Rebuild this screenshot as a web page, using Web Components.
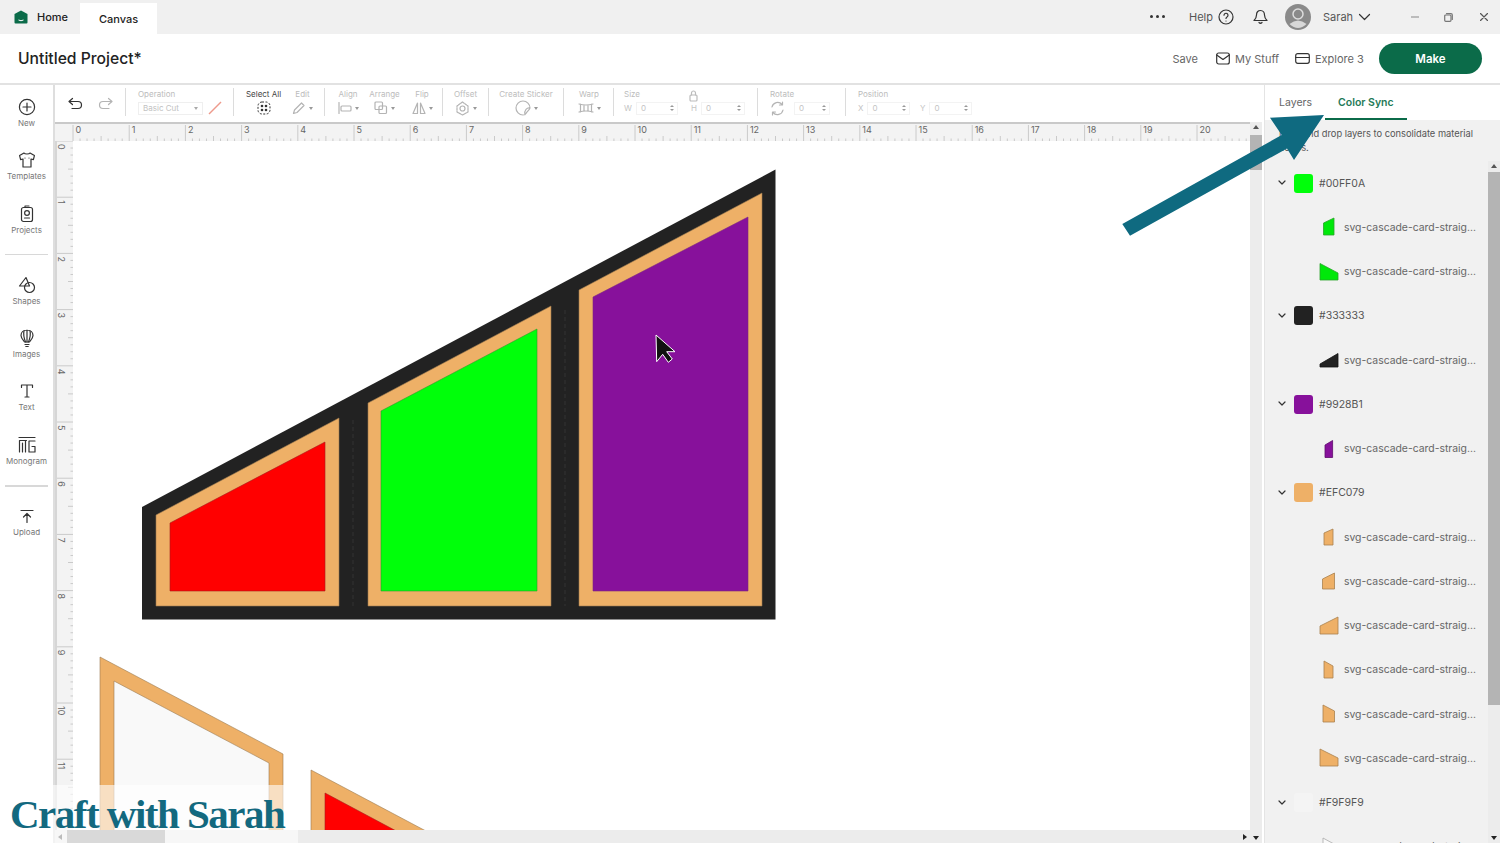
<!DOCTYPE html>
<html lang="en">
<head>
<meta charset="utf-8">
<title>Untitled Project</title>
<style>
  html, body { margin: 0; height: 100%; overflow: hidden; background: #fff; }
  body { font-family: Inter, "Liberation Sans", sans-serif; color: #333; }
  .ico { display: block; fill: none; stroke: currentColor; stroke-width: 1.2; stroke-linecap: round; stroke-linejoin: round; }
</style>
</head>
<body>

<cs-app>
  <cs-topbar slot="topbar"></cs-topbar>
  <cs-projectbar slot="projectbar" name="Untitled Project*"></cs-projectbar>

  <cs-rail slot="rail">
    <cs-rail-item label="New"><svg class="ico" width="20" height="20" viewBox="0 0 20 20"><circle cx="10" cy="10" r="7.6"/><path d="M10 6v8M6 10h8"/></svg></cs-rail-item>
    <cs-rail-item label="Templates"><svg class="ico" width="20" height="20" viewBox="0 0 20 20"><path d="M7 3 2.6 5.6l1 4L6 9v8h8V9l2.400.6 1-4L13 3c-.8 1.300-5.200 1.300-6 0z"/><path d="M8 8h.01M12 8h.01"/></svg></cs-rail-item>
    <cs-rail-item label="Projects"><svg class="ico" width="20" height="20" viewBox="0 0 20 20"><rect x="4.500" y="3.500" width="11" height="14" rx="2"/><path d="M8 3.500V2h4"/><circle cx="10" cy="9" r="2.400"/><path d="M7.500 14h5"/></svg></cs-rail-item>
    <cs-rail-sep></cs-rail-sep>
    <cs-rail-item label="Shapes"><svg class="ico" width="20" height="20" viewBox="0 0 20 20"><path d="M9 2.500 2.500 11h10z"/><circle cx="12.500" cy="12.500" r="5"/></svg></cs-rail-item>
    <cs-rail-item label="Images"><svg class="ico" width="20" height="20" viewBox="0 0 20 20"><path d="M10 2c-3.800 0-6 2.600-6 5.500 0 2.500 2 4.500 3.500 6.500h5C14 12 16 10 16 7.500 16 4.600 13.800 2 10 2z"/><path d="M10 2v12M7 3c-.8 3 0 7 1.500 11M13 3c.8 3 0 7-1.500 11M8 16.500h4M8.800 18.500h2.400"/></svg></cs-rail-item>
    <cs-rail-item label="Text"><svg class="ico" width="20" height="20" viewBox="0 0 20 20"><path d="M4.500 6.500V4h11v2.500M10 4v12M8 16h4"/></svg></cs-rail-item>
    <cs-rail-item label="Monogram"><svg class="ico" width="20" height="20" viewBox="0 0 20 20"><path d="M2 2.500h16M2.500 5.500h7M2.500 5.500V17M5.500 8v9M8.500 5.500V17M18 6h-6v11h6v-5.500h-3"/></svg></cs-rail-item>
    <cs-rail-sep></cs-rail-sep>
    <cs-rail-item label="Upload"><svg class="ico" width="20" height="20" viewBox="0 0 20 20"><path d="M4 4.500h12M10 16.500V8M6.500 11 10 7.500l3.500 3.500"/></svg></cs-rail-item>
  </cs-rail>

  <cs-toolbar slot="toolbar">
    <cs-tool style="width:45px" class="plain">
      <div style="display:flex;gap:15px;color:#333;margin-top:-8px">
        <svg class="ico" width="15" height="14" viewBox="0 0 15 14"><path d="M4.500 1.500 1 4.500l3.500 3M1 4.500h9a3.500 3.500 0 0 1 0 7H4"/></svg>
        <svg class="ico" width="15" height="14" viewBox="0 0 15 14" style="color:#b4b4b4"><path d="M10.500 1.500 14 4.500l-3.500 3M14 4.500H5a3.500 3.500 0 0 0 0 7h6"/></svg>
      </div>
    </cs-tool>
    <cs-tool-sep></cs-tool-sep>
    <cs-tool label="Operation" start style="width:83px">
      <div style="display:flex;align-items:center;gap:5px">
        <cs-select text="Basic Cut"></cs-select>
        <svg width="14" height="14" viewBox="0 0 14 14"><path d="M1 13 13 1" stroke="#ee9a8c" stroke-width="1.500"/></svg>
      </div>
    </cs-tool>
    <cs-tool-sep></cs-tool-sep>
    <cs-tool label="Select All" active style="width:35px">
      <svg width="16" height="16" viewBox="0 0 16 16" fill="none" stroke="#333"><rect x="2" y="2" width="12" height="12" rx="4" stroke-dasharray="2 1.500"/><g fill="#333" stroke="none"><circle cx="6" cy="6" r="1.300"/><circle cx="10" cy="6" r="1.300"/><circle cx="6" cy="10" r="1.300"/><circle cx="10" cy="10" r="1.300"/></g></svg>
    </cs-tool>
    <cs-tool label="Edit" caret style="width:19px;margin-left:12px">
      <svg class="ico" width="14" height="14" viewBox="0 0 14 14"><path d="M1.500 12.500 2.500 9 9.500 2l2.500 2.500-7 7z"/></svg>
    </cs-tool>
    <cs-tool-sep></cs-tool-sep>
    <cs-tool label="Align" caret style="width:20px;margin-left:1px">
      <svg class="ico" width="14" height="14" viewBox="0 0 14 14"><path d="M1 1.500v11"/><rect x="3" y="5" width="10" height="5" rx="1"/></svg>
    </cs-tool>
    <cs-tool label="Arrange" caret style="width:31px;margin-left:11px">
      <svg class="ico" width="14" height="14" viewBox="0 0 14 14"><rect x="1" y="1" width="7.500" height="7.500" rx="1"/><rect x="5" y="5" width="7.500" height="7.500" rx="1"/></svg>
    </cs-tool>
    <cs-tool label="Flip" caret style="width:16px;margin-left:14px">
      <svg class="ico" width="14" height="14" viewBox="0 0 14 14"><path d="M5.500 2 1 12.500h4.500zM8.500 2 13 12.500H8.500z"/></svg>
    </cs-tool>
    <cs-tool-sep></cs-tool-sep>
    <cs-tool label="Offset" caret style="width:21px">
      <svg class="ico" width="15" height="15" viewBox="0 0 15 15"><circle cx="7.500" cy="7.500" r="2.500"/><path d="M7.500 1 13 5v6l-5.500 3L2 11V5z" stroke-dasharray="2 1"/></svg>
    </cs-tool>
    <cs-tool-sep></cs-tool-sep>
    <cs-tool label="Create Sticker" caret style="width:50px">
      <svg class="ico" width="16" height="16" viewBox="0 0 16 16"><path d="M8 15A7 7 0 1 1 15 8c0 1-3.500 4.500-4 5.500S9 15 8 15zM15 8c-3-.6-6 2-5 6.600"/></svg>
    </cs-tool>
    <cs-tool-sep></cs-tool-sep>
    <cs-tool label="Warp" caret style="width:24px;margin-left:1px">
      <svg class="ico" width="16" height="12" viewBox="0 0 16 12"><path d="M1 2q7 2 14 0M1 10q7-2 14 0M2.500 2v8M6 3v6M10 3v6M13.500 2v8"/></svg>
    </cs-tool>
    <cs-tool-sep></cs-tool-sep>
    <cs-tool label="Size" start style="width:121px;margin-left:-2px">
      <svg slot="aside" class="ico" width="9" height="12" viewBox="0 0 9 12" style="margin:0 0 0 49px"><rect x="1" y="5" width="7" height="6" rx="1"/><path d="M2.500 5V3a2 2 0 0 1 4 0v2"/></svg>
      <div style="display:flex;gap:13px">
        <cs-num prefix="W" style="width:54px"></cs-num>
        <cs-num prefix="H" style="width:54px"></cs-num>
      </div>
    </cs-tool>
    <cs-tool-sep></cs-tool-sep>
    <cs-tool label="Rotate" start style="width:63px">
      <div style="display:flex;gap:5px;align-items:center">
        <svg class="ico" width="15" height="15" viewBox="0 0 15 15"><path d="M2 6a5.700 5.700 0 0 1 10-2.500M13 9A5.700 5.700 0 0 1 3 11.500M12.500 1v3h-3M2.500 14v-3h3"/></svg>
        <cs-num style="width:40px"></cs-num>
      </div>
    </cs-tool>
    <cs-tool-sep></cs-tool-sep>
    <cs-tool label="Position" start style="width:116px">
      <div style="display:flex;gap:10px">
        <cs-num prefix="X" style="width:52px"></cs-num>
        <cs-num prefix="Y" style="width:52px"></cs-num>
      </div>
    </cs-tool>
  </cs-toolbar>

  <cs-workspace slot="workspace">
    <cs-ruler slot="top" dir="h" length="1195" count="21"></cs-ruler>
    <cs-ruler slot="left" dir="v" length="689" count="12"></cs-ruler>
    <cs-canvas slot="canvas"></cs-canvas>
    <cs-scrollbar slot="vscroll" dir="v" before="3" size="35"></cs-scrollbar>
    <cs-scrollbar slot="hscroll" dir="h" before="2" size="98"></cs-scrollbar>
  </cs-workspace>

  <cs-panel slot="panel">
    <cs-color-group color="#00ff0a" name="#00FF0A">
      <cs-layer color="#00e80a" edge="#2aa52a" points="4.500,6 15,1 15,18 4.500,18"></cs-layer>
      <cs-layer color="#00e80a" edge="#2aa52a" points="1,1.500 19,11 19,18 1,18"></cs-layer>
    </cs-color-group>
    <cs-color-group color="#222222" name="#333333">
      <cs-layer color="#222" edge="#111" points="1,14 19,3.500 19,17 1,17"></cs-layer>
    </cs-color-group>
    <cs-color-group color="#87119b" name="#9928B1">
      <cs-layer color="#87119b" edge="#5e0d6c" points="6,6 13.600,1.500 13.600,18.500 6,18.500"></cs-layer>
    </cs-color-group>
    <cs-color-group color="#eeb067" name="#EFC079">
      <cs-layer color="#eeb067" edge="#a9814f" points="5,6 14,2 14,18 5,18"></cs-layer>
      <cs-layer color="#eeb067" edge="#a9814f" points="3.500,8 15.500,2 15.500,18 3.500,18"></cs-layer>
      <cs-layer color="#eeb067" edge="#a9814f" points="1,10 19,1 19,18 1,18"></cs-layer>
      <cs-layer color="#eeb067" edge="#a9814f" points="5,1 14,6 14,18 5,18"></cs-layer>
      <cs-layer color="#eeb067" edge="#a9814f" points="4,1 15.500,7 15.500,18 4,18"></cs-layer>
      <cs-layer color="#eeb067" edge="#a9814f" points="1,1 19,10 19,18 1,18"></cs-layer>
    </cs-color-group>
    <cs-color-group color="#f4f4f4" name="#F9F9F9">
      <cs-layer color="#f9f9f9" edge="#aaa" points="4,1 15,7 15,18 4,18"></cs-layer>
    </cs-color-group>
  </cs-panel>
</cs-app>

<cs-watermark text="Craft with Sarah"></cs-watermark>
<cs-arrow></cs-arrow>

<script>
class BaseElement extends HTMLElement {
  constructor() {
    super();
    this.attachShadow({ mode: 'open' });
  }
  connectedCallback() {
    this.shadowRoot.innerHTML = `<style>${this.getStyles()}</style>${this.getTemplate()}`;
  }
  getStyles() { return ':host { display: block; }'; }
  getTemplate() { return '<slot></slot>'; }
}

const ICO = 'fill="none" stroke="currentColor" stroke-width="1.200" stroke-linecap="round" stroke-linejoin="round" style="display:block"';

class CsApp extends BaseElement {
  getStyles() {
    return `
      :host { display: grid; width: 1500px; height: 843px; grid-template-columns: 55px 1209px 236px; grid-template-rows: 34px 51px 37px 1fr; overflow: hidden; }
      ::slotted([slot=topbar]), ::slotted([slot=projectbar]) { grid-column: 1 / -1; }
      ::slotted([slot=rail]) { grid-row: 3 / 5; }
      ::slotted([slot=panel]) { grid-row: 3 / 5; grid-column: 3; }
    `;
  }
  getTemplate() {
    return `<slot name="topbar"></slot><slot name="projectbar"></slot><slot name="rail"></slot><slot name="toolbar"></slot><slot name="panel"></slot><slot name="workspace"></slot>`;
  }
}

class CsTopbar extends BaseElement {
  getStyles() {
    return `
      :host { display: flex; align-items: center; background: #f0f0f0; padding: 0 12px 0 14px; height: 34px; font-size: 11px; color: #555; }
      .home { display: flex; align-items: center; gap: 9px; font-weight: 500; color: #222; }
      .tab { background: #fff; width: 77px; height: 31px; margin: 3px 0 0 12px; display: flex; align-items: center; justify-content: center; font-weight: 500; color: #222; }
      .grow { flex: 1; }
      .right { display: flex; align-items: center; color: #555; }
      .right > * { flex: none; }
      .dots { display: flex; gap: 3px; width: 16px; margin-top: -2px; }
      .dots i { width: 3px; height: 3px; border-radius: 50%; background: #333; }
    `;
  }
  getTemplate() {
    return `
      <div class="home">
        <svg width="14" height="14" viewBox="0 0 14 14" style="display:block"><path d="M7 .5 13.500 4v8.500q0 1-1 1h-11q-1 0-1-1V4z" fill="#0b6b49"/><path d="M4.500 10q2.500 1.500 5 0" stroke="#fff" fill="none"/></svg>
        <span>Home</span>
      </div>
      <div class="tab">Canvas</div>
      <div class="grow"></div>
      <div class="right">
        <div class="dots"><i></i><i></i><i></i></div>
        <span style="margin-left:23px;width:24px">Help</span>
        <svg width="16" height="16" viewBox="0 0 16 16" style="margin-left:5px;color:#333" ${ICO}><circle cx="8" cy="8" r="7"/><path d="M6 6.200a2 2 0 1 1 3 1.800c-.7.400-1 .8-1 1.500M8 12h.01"/></svg>
        <svg width="15" height="16" viewBox="0 0 15 16" style="margin-left:19px;color:#333" ${ICO}><path d="M7.500 1.500c-2.700 0-4 2-4 4.500 0 3-1 4-2.500 5.500h13C12.500 10 11.500 9 11.500 6c0-2.500-1.300-4.500-4-4.500zM6 13.500q1.500 1.500 3 0"/></svg>
        <svg width="26" height="26" viewBox="0 0 26 26" style="display:block;margin-left:17px"><circle cx="13" cy="13" r="13" fill="#8a8a8a"/><circle cx="13" cy="10" r="5" fill="#8a8a8a" stroke="#ddd" stroke-width="1.500"/><path d="M4.500 20q8.500-7 17 0-8.500 8-17 0z" fill="#d8d8d8"/></svg>
        <span style="margin-left:12px;width:29px">Sarah</span>
        <svg width="13" height="8" viewBox="0 0 13 8" style="margin-left:6px;color:#333" ${ICO}><path d="M1.500 1.500 6.500 6.500 11.500 1.500"/></svg>
        <svg width="8" height="2" viewBox="0 0 8 2" style="margin-left:40px;color:#888" ${ICO}><path d="M0 1h8"/></svg>
        <svg width="9" height="9" viewBox="0 0 9 9" style="margin-left:25px;color:#777" ${ICO}><rect x=".7" y="2" width="6.300" height="6.300" rx="1"/><path d="M2.500.7H7q1.300 0 1.300 1.300v4.500"/></svg>
        <svg width="8" height="8" viewBox="0 0 8 8" style="margin-left:27px;color:#555" ${ICO}><path d="M.5.5l7 7M7.500.5l-7 7"/></svg>
      </div>
    `;
  }
}

class CsProjectbar extends BaseElement {
  getStyles() {
    return `
      :host { display: flex; align-items: center; background: #fff; padding: 0 18px; height: 49px; border-bottom: 2px solid #e2e2e2; font-size: 11px; color: #666; }
      h1 { margin: 0; font: 500 15.700px Inter, "Liberation Sans", sans-serif; color: #222; flex: 1; }
      .item { display: flex; align-items: center; gap: 5px; color: #666; white-space: nowrap; }
      button { all: unset; width: 103px; height: 31px; margin-left: 16px; border-radius: 16px; background: #0b6b49; color: #fff; font-weight: 600; font-size: 11.500px; text-align: center; }
    `;
  }
  getTemplate() {
    return `
      <h1>${this.getAttribute('name')}</h1>
      <div class="item">Save</div>
      <div class="item" style="margin-left:18px">
        <svg width="14" height="13" viewBox="0 0 14 13" style="color:#333" ${ICO}><rect x=".7" y="1" width="12.600" height="11" rx="2"/><path d="M.7 3 7 7.500 13.300 3"/></svg>
        <span style="width:43px">My Stuff</span>
      </div>
      <div class="item" style="margin-left:17px">
        <svg width="15" height="11" viewBox="0 0 15 11" style="color:#333" ${ICO}><rect x=".7" y=".7" width="13.600" height="9.600" rx="2"/><path d="M.7 4.500h13.600"/></svg>
        <span style="width:48px">Explore 3</span>
      </div>
      <button>Make</button>
    `;
  }
}

class CsRail extends BaseElement {
  getStyles() {
    return `:host { display: block; box-sizing: border-box; padding-top: 10px; border-right: 2px solid #dedede; background: #fff; overflow: hidden; }`;
  }
}

class CsRailItem extends BaseElement {
  getStyles() {
    return `
      :host { display: flex; flex-direction: column; align-items: center; box-sizing: border-box; width: 53px; height: 53.300px; padding-top: 2px; color: #333; }
      span { margin-top: 1px; font-size: 8px; line-height: 11px; color: #777; white-space: nowrap; }
    `;
  }
  getTemplate() {
    return `<slot></slot><span>${this.getAttribute('label')}</span>`;
  }
}

class CsRailSep extends BaseElement {
  getStyles() {
    return `:host { display: block; height: 1.500px; margin: -1px 5px 17.500px; background: #d8d8d8; }`;
  }
  getTemplate() { return ''; }
}

class CsToolbar extends BaseElement {
  getStyles() {
    return `:host { display: flex; box-sizing: border-box; height: 37px; padding-left: 13px; background: #fff; overflow: hidden; }`;
  }
}

class CsToolSep extends BaseElement {
  getStyles() {
    return `:host { display: block; flex: none; width: 1px; height: 28px; margin: 3px 12px 0 12px; background: #dcdcdc; }`;
  }
  getTemplate() { return ''; }
}

class CsTool extends BaseElement {
  getStyles() {
    const active = this.hasAttribute('active');
    const start = this.hasAttribute('start');
    return `
      :host { display: flex; flex: none; flex-direction: column; align-items: ${start ? 'flex-start' : 'center'}; box-sizing: border-box; padding-top: 5px; color: ${active ? '#333' : '#b4b4b4'}; }
      .label { display: flex; height: 8px; line-height: 8px; font-size: 8px; color: ${active ? '#444' : '#bcbcbc'}; white-space: nowrap; justify-content: center; }
      .body { display: flex; align-items: center; gap: 3px; margin-top: 1px; height: 18px; }
      .caret { width: 0; height: 0; border: 2.500px solid transparent; border-top: 3px solid #999; border-bottom: 0; }
    `;
  }
  getTemplate() {
    const label = this.getAttribute('label');
    return `
      ${label ? `<div class="label">${label}<slot name="aside"></slot></div>` : '<div class="label"></div>'}
      <div class="body"><slot></slot>${this.hasAttribute('caret') ? '<i class="caret"></i>' : ''}</div>
    `;
  }
}

class CsSelect extends BaseElement {
  getStyles() {
    return `
      :host { display: flex; align-items: center; justify-content: space-between; box-sizing: border-box; width: 65px; height: 13px; padding: 0 4px; border: 1px solid #efefef; font-size: 8px; color: #c2c2c2; }
      i { width: 0; height: 0; border: 2.500px solid transparent; border-top: 3px solid #aaa; border-bottom: 0; }
    `;
  }
  getTemplate() { return `<span>${this.getAttribute('text')}</span><i></i>`; }
}

class CsNum extends BaseElement {
  getStyles() {
    return `
      :host { display: flex; flex: none; align-items: center; font-size: 8px; color: #c4c4c4; box-sizing: border-box; height: 13px; }
      .box { flex: 1; display: flex; align-items: center; justify-content: space-between; margin-left: 4px; padding: 0 3px 0 4px; height: 13px; border: 1px solid #f3f3f3; box-sizing: border-box; }
      .spin { display: flex; flex-direction: column; gap: 1.500px; }
      .spin i { width: 0; height: 0; border: 2px solid transparent; }
      .spin i:first-child { border-bottom: 2.500px solid #999; border-top: 0; }
      .spin i:last-child { border-top: 2.500px solid #999; border-bottom: 0; }
    `;
  }
  getTemplate() {
    const prefix = this.getAttribute('prefix');
    return `${prefix ? `<span>${prefix}</span>` : ''}<div class="box"><span>0</span><div class="spin"><i></i><i></i></div></div>`;
  }
}

class CsWorkspace extends BaseElement {
  getStyles() {
    return `
      :host { display: grid; grid-template-columns: 18px 1177px 14px; grid-template-rows: 19px 689px 13px; background: #fff; overflow: hidden; }
      ::slotted([slot=top]), ::slotted([slot=hscroll]) { grid-column: 1 / 3; }
      ::slotted([slot=vscroll]) { grid-column: 3; grid-row: 1 / 4; }
    `;
  }
  getTemplate() {
    return `<slot name="top"></slot><slot name="vscroll"></slot><slot name="left"></slot><slot name="canvas"></slot><slot name="hscroll"></slot>`;
  }
}

// inch rulers, drawn in an svg so the ticks land exactly
class CsRuler extends BaseElement {
  getStyles() {
    const horizontal = this.getAttribute('dir') === 'h';
    return `
      :host { display: block; overflow: hidden; background: #f3f3f3; box-sizing: border-box; ${horizontal ? 'border-top: 2px solid #c9c9c9; height: 19px;' : 'border-left: 2px solid #d6d6d6; width: 18px;'} }
      svg { display: block; }
      text { font: 9px Inter, "Liberation Sans", sans-serif; fill: #666; }
    `;
  }
  getTemplate() {
    const horizontal = this.getAttribute('dir') === 'h';
    const length = Number(this.getAttribute('length'));
    const count = Number(this.getAttribute('count'));
    const unit = 56.2;
    const base = horizontal ? 17 : 16;
    let ticks = '';
    let labels = '';
    for (let i = 0; i < count; i++) {
      for (let j = 0; j < 8; j++) {
        const along = i * unit + j * unit / 8;
        const depth = j === 0 ? 16 : j === 4 ? 5 : 2.5;
        if (horizontal) {
          const x = 18 + along;
          ticks += `M${x} ${base - depth}V${base}`;
        } else {
          ticks += `M${base - depth} ${along}H${base}`;
        }
      }
      if (horizontal) {
        labels += `<text x="${18 + i * unit + 2.5}" y="9">${i}</text>`;
      } else {
        labels += `<text transform="translate(.5 ${i * unit + 3}) rotate(90)">${i}</text>`;
      }
    }
    const size = horizontal ? `width="${length}" height="${base}"` : `width="${base}" height="${length}"`;
    return `<svg ${size}><path d="${ticks}" stroke="#cacaca" stroke-width="1" fill="none"/>${labels}</svg>`;
  }
}

class CsCanvas extends BaseElement {
  getStyles() {
    return `:host { display: block; overflow: hidden; background: #fff; } svg { display: block; }`;
  }
  getTemplate() {
    const orange = 'fill="#eeb067" stroke="#9a7a50" stroke-width=".6"';
    return `
      <svg width="1177" height="689" viewBox="73 141 1177 689">
        <polygon points="142,507 775.500,169.500 775.500,619.500 142,619.500" fill="#222"/>
        <path d="M353 420V606M565 310V606" stroke="#333" stroke-dasharray="4 3" fill="none"/>
        <polygon points="156,515 339,418 339,606 156,606" ${orange}/>
        <polygon points="170,523 325,442 325,591 170,591" fill="#ff0000" stroke="#a51c1c" stroke-width=".6"/>
        <polygon points="368,403 551,306 551,606 368,606" ${orange}/>
        <polygon points="381,411 537,329 537,591 381,591" fill="#00ff0a" stroke="#2b9a2b" stroke-width=".6"/>
        <polygon points="579,290 762,193 762,606 579,606" ${orange}/>
        <polygon points="593,297 748,217 748,591 593,591" fill="#87119b" stroke="#7a2a80" stroke-width=".6"/>
        <polygon points="100,657 283,754 283,840 100,840" ${orange}/>
        <polygon points="114,681 269,763 269,840 114,840" fill="#f9f9f9" stroke="#9a7a50" stroke-width=".6"/>
        <polygon points="311,770 490,865 311,865" ${orange}/>
        <polygon points="325,793 460,865 325,865" fill="#ff0000" stroke="#a51c1c" stroke-width=".6"/>
        <polygon points="656,335 656.700,361.700 662.700,354.300 668.300,362.300 672.300,359 666.700,351.700 675,351.700" fill="#111" stroke="#fff" stroke-width="1"/>
      </svg>
    `;
  }
}

class CsScrollbar extends BaseElement {
  getStyles() {
    const vertical = this.getAttribute('dir') === 'v';
    return `
      :host { display: flex; box-sizing: border-box; flex-direction: ${vertical ? 'column' : 'row'}; background: #ececec; ${vertical ? 'width: 12px; height: 100%;' : 'height: 13px; width: 100%;'} }
      .arrow { flex: none; ${vertical ? 'height: 10px;' : 'width: 10px;'} display: flex; align-items: center; justify-content: center; }
      .arrow i { width: 0; height: 0; border: 3px solid transparent; }
      .up i { border-bottom: 4px solid #555; border-top: 0; }
      .down i { border-top: 4px solid #222; border-bottom: 0; }
      .left i { border-right: 4px solid #555; border-left: 0; }
      .right i { border-left: 4px solid #222; border-right: 0; }
      .thumb { flex: none; background: ${vertical ? '#b4b4b4' : '#a0a0a0'}; }
      .rest { flex: 1; }
    `;
  }
  getTemplate() {
    const vertical = this.getAttribute('dir') === 'v';
    const before = this.getAttribute('before');
    const size = this.getAttribute('size');
    const sizing = vertical ? `height:${size}px` : `width:${size}px`;
    const gap = vertical ? `height:${before}px` : `width:${before}px`;
    return `
      <div class="arrow ${vertical ? 'up' : 'left'}"><i></i></div>
      <div style="flex:none;${gap}"></div>
      <div class="thumb" style="${sizing}"></div>
      <div class="rest"></div>
      <div class="arrow ${vertical ? 'down' : 'right'}"><i></i></div>
    `;
  }
}

class CsPanel extends BaseElement {
  getStyles() {
    return `
      :host { display: flex; flex-direction: column; box-sizing: border-box; height: 758px; border-left: 1px solid #e4e4e4; background: #f1f1f1; overflow: hidden; }
      .tabs { display: flex; flex: none; height: 35px; background: #fff; font-size: 10.500px; padding-left: 14px; }
      .tab { padding-top: 11px; color: #666; }
      .on { margin-left: 13px; padding: 11px 13px 0; color: #1f7a58; font-weight: 600; border-bottom: 2px solid #0b6b49; }
      .desc { flex: none; height: 41px; box-sizing: border-box; padding: 7px 20px 0 14px; font-size: 9.300px; line-height: 14px; color: #555; }
      .rows { flex: 1; display: flex; min-height: 0; }
      .list { flex: 1; padding-left: 4px; overflow: hidden; }
    `;
  }
  getTemplate() {
    return `
      <div class="tabs"><div class="tab">Layers</div><div class="tab on">Color Sync</div></div>
      <div class="desc">Drag and drop layers to consolidate material colors.</div>
      <div class="rows">
        <div class="list"><slot></slot></div>
        <cs-scrollbar dir="v" before="1" size="533"></cs-scrollbar>
      </div>
    `;
  }
}

class CsColorGroup extends BaseElement {
  getStyles() {
    return `
      .head { display: flex; align-items: center; height: 44.250px; padding-left: 9px; font-size: 10.500px; color: #555; }
      .sw { width: 19px; height: 19px; border-radius: 3px; margin: 0 6px 0 8px; box-sizing: border-box; }
      svg { flex: none; color: #333; }
    `;
  }
  getTemplate() {
    return `
      <div class="head">
        <svg width="8" height="6" viewBox="0 0 8 6" ${ICO}><path d="M1 1l3 3 3-3"/></svg>
        <div class="sw" style="background:${this.getAttribute('color')}"></div>
        <span>${this.getAttribute('name')}</span>
      </div>
      <slot></slot>
    `;
  }
}

class CsLayer extends BaseElement {
  getStyles() {
    return `
      :host { display: flex; align-items: center; height: 44.250px; padding-left: 50px; font-size: 10.400px; color: #666; white-space: nowrap; }
      svg { flex: none; display: block; margin-right: 5px; }
    `;
  }
  getTemplate() {
    return `
      <svg width="20" height="20" viewBox="0 0 20 20"><polygon points="${this.getAttribute('points')}" fill="${this.getAttribute('color')}" stroke="${this.getAttribute('edge')}" stroke-width=".8"/></svg>
      <span>svg-cascade-card-straig...</span>
    `;
  }
}

class CsWatermark extends BaseElement {
  getStyles() {
    return `
      :host { position: absolute; left: 0; top: 785px; width: 298px; height: 58px; background: rgba(255,255,255,.6); }
      span { position: absolute; left: 10px; top: 4px; font: 700 41px/50px "Liberation Serif", serif; letter-spacing: -1.500px; color: #13697f; white-space: nowrap; }
    `;
  }
  getTemplate() { return `<span>${this.getAttribute('text')}</span>`; }
}

class CsArrow extends BaseElement {
  getStyles() {
    return `:host { position: absolute; left: 0; top: 0; width: 1500px; height: 843px; pointer-events: none; } svg { display: block; }`;
  }
  getTemplate() {
    return `<svg width="1500" height="843"><polygon points="1122.300,224 1130,235.700 1287,148.500 1294,160 1324,115 1270,117.700 1281.700,135" fill="#0f6a80"/></svg>`;
  }
}

customElements.define('cs-app', CsApp);
customElements.define('cs-topbar', CsTopbar);
customElements.define('cs-projectbar', CsProjectbar);
customElements.define('cs-rail', CsRail);
customElements.define('cs-rail-item', CsRailItem);
customElements.define('cs-rail-sep', CsRailSep);
customElements.define('cs-toolbar', CsToolbar);
customElements.define('cs-tool-sep', CsToolSep);
customElements.define('cs-tool', CsTool);
customElements.define('cs-select', CsSelect);
customElements.define('cs-num', CsNum);
customElements.define('cs-workspace', CsWorkspace);
customElements.define('cs-ruler', CsRuler);
customElements.define('cs-canvas', CsCanvas);
customElements.define('cs-scrollbar', CsScrollbar);
customElements.define('cs-panel', CsPanel);
customElements.define('cs-color-group', CsColorGroup);
customElements.define('cs-layer', CsLayer);
customElements.define('cs-watermark', CsWatermark);
customElements.define('cs-arrow', CsArrow);
</script>
</body>
</html>
